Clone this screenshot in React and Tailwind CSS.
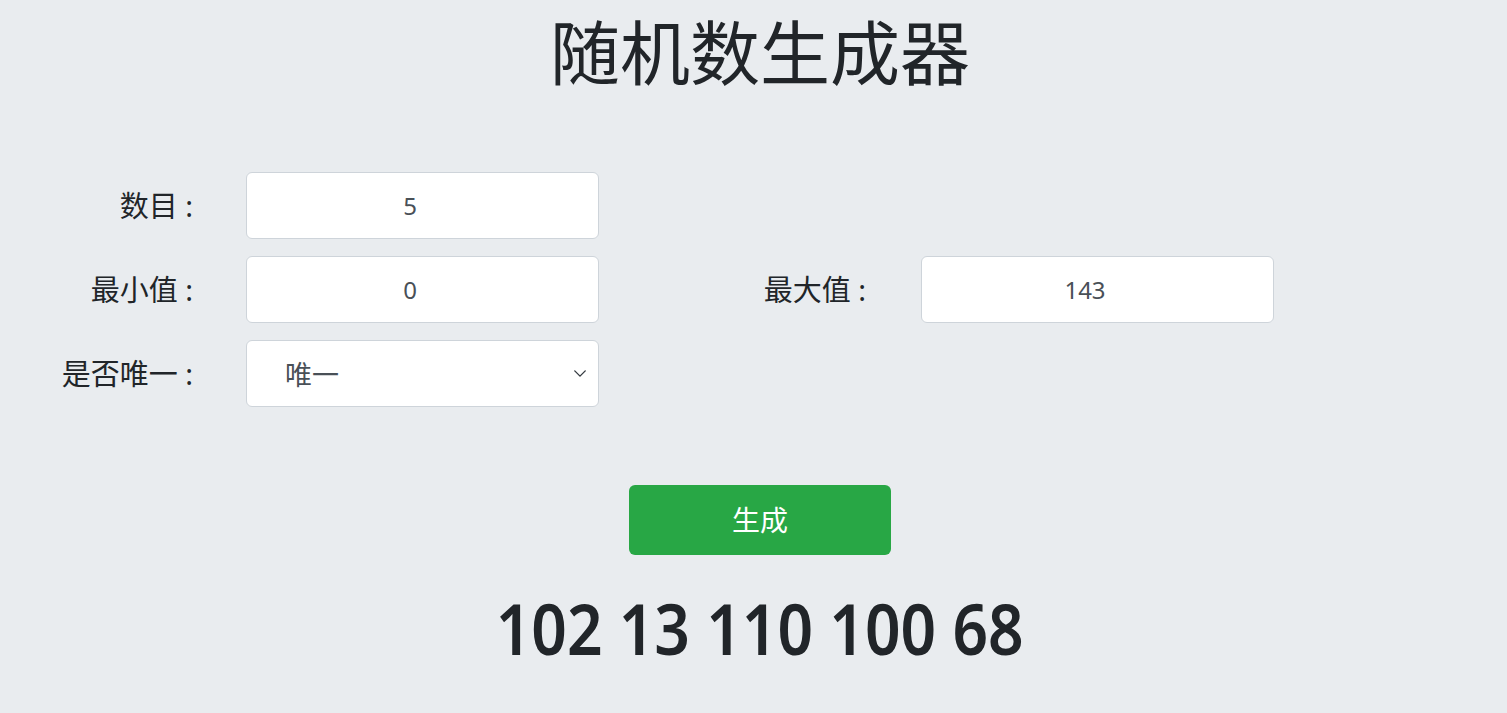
import { useState } from "react";

const fontStack = {
  fontFamily: '"Noto Sans", "Noto Sans CJK SC", sans-serif',
};

const inputCls =
  "w-[353px] h-[67px] bg-white border border-[#ced4da] rounded-[6px] pr-[25px] text-center text-[24px] text-[#495057] outline-none";

function Label({ children, width }) {
  return (
    <label className={`${width} text-right text-[29px] text-[#212529] pr-[4px]`}>
      {children}
    </label>
  );
}

export default function App() {
  const [unique, setUnique] = useState("唯一");
  const numbers = [102, 13, 110, 100, 68];

  return (
    <div className="min-h-screen bg-[#e9ecef] text-[#212529]" style={fontStack}>
      {/* Title */}
      <h1 className="pl-[13px] pt-[18px] text-center text-[70px] leading-none font-normal">
        随机数生成器
      </h1>

      {/* Form */}
      <div className="mt-[84px] flex flex-col gap-[17px]">
        <div className="flex items-center">
          <Label width="w-[197px]">数目 :</Label>
          <input type="text" defaultValue="5" className={`ml-[49px] ${inputCls}`} />
        </div>
        <div className="flex items-center">
          <Label width="w-[197px]">最小值 :</Label>
          <input type="text" defaultValue="0" className={`ml-[49px] ${inputCls}`} />
          <Label width="w-[271px]">最大值 :</Label>
          <input type="text" defaultValue="143" className={`ml-[51px] ${inputCls}`} />
        </div>
        <div className="flex items-center">
          <Label width="w-[197px]">是否唯一 :</Label>
          <div className="relative ml-[49px]">
            <select
              value={unique}
              onChange={(e) => setUnique(e.target.value)}
              className="appearance-none w-[353px] h-[67px] bg-white border border-[#ced4da] rounded-[6px] pl-[38px] pt-[3px] text-[27px] text-[#495057] outline-none"
            >
              <option value="唯一">唯一</option>
              <option value="不唯一">不唯一</option>
            </select>
            <svg
              className="absolute right-[12px] top-[29px] w-[14px] h-[9px] pointer-events-none"
              viewBox="0 0 16 10"
              fill="none"
              stroke="#343a40"
              strokeWidth="1.6"
              strokeLinecap="round"
              strokeLinejoin="round"
            >
              <path d="M2 2l6 6 6-6" />
            </svg>
          </div>
        </div>
      </div>

      {/* Button */}
      <div className="pl-[13px] mt-[78px] flex justify-center">
        <button className="w-[262px] h-[70px] bg-[#28a745] text-white text-[28px] rounded-[6px]">
          生成
        </button>
      </div>

      {/* Result */}
      <div className="pl-[13px] mt-[38px] text-center leading-none">
        <span className="inline-block text-[70px] font-semibold scale-x-[0.89]">
          {numbers.join(" ")}
        </span>
      </div>
    </div>
  );
}
